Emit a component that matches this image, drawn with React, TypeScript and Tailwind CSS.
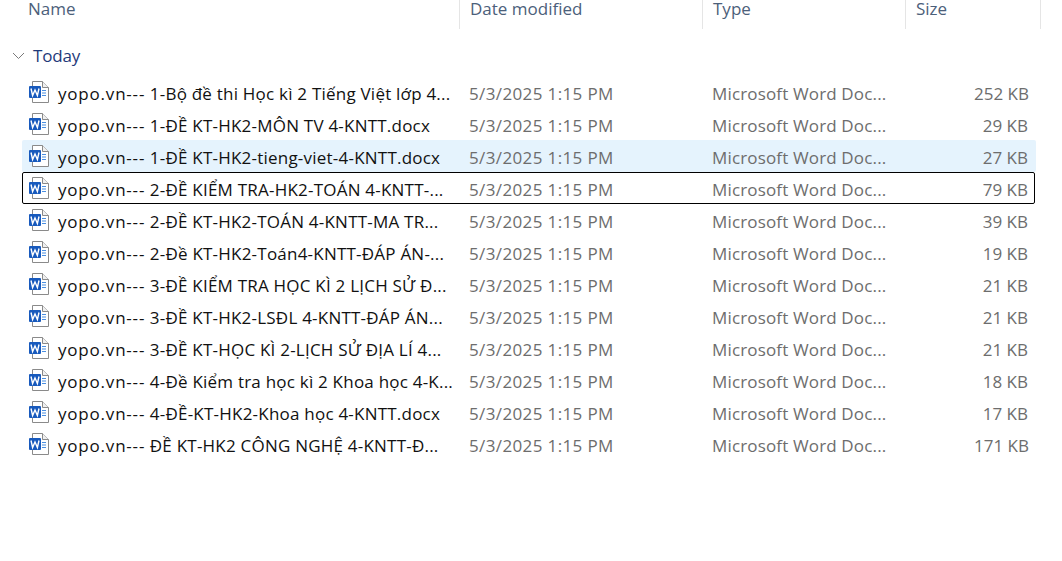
const files = [
  { name: " 1-Bộ đề thi Học kì 2 Tiếng Việt lớp 4...", size: "252 KB" },
  { name: " 1-ĐỀ KT-HK2-MÔN TV 4-KNTT.docx", size: "29 KB" },
  { name: " 1-ĐỀ KT-HK2-tieng-viet-4-KNTT.docx", size: "27 KB", hovered: true },
  { name: " 2-ĐỀ KIỂM TRA-HK2-TOÁN 4-KNTT-...", size: "79 KB", focused: true },
  { name: " 2-ĐỀ KT-HK2-TOÁN 4-KNTT-MA TR...", size: "39 KB" },
  { name: " 2-Đề KT-HK2-Toán4-KNTT-ĐÁP ÁN-...", size: "19 KB" },
  { name: " 3-ĐỀ KIỂM TRA HỌC KÌ 2 LỊCH SỬ Đ...", size: "21 KB" },
  { name: " 3-ĐỀ KT-HK2-LSĐL 4-KNTT-ĐÁP ÁN...", size: "21 KB" },
  { name: " 3-ĐỀ KT-HỌC KÌ 2-LỊCH SỬ ĐỊA LÍ 4...", size: "21 KB" },
  { name: " 4-Đề Kiểm tra học kì 2 Khoa học 4-K...", size: "18 KB" },
  { name: " 4-ĐỀ-KT-HK2-Khoa học 4-KNTT.docx", size: "17 KB" },
  { name: " ĐỀ KT-HK2 CÔNG NGHỆ 4-KNTT-Đ...", size: "171 KB" },
];

function WordIcon() {
  return (
    <svg width="20" height="22" viewBox="0 0 20 22" className="shrink-0">
      <path d="M3.5 .5H13.5L19.5 6.5V21.5H3.5Z" fill="#fff" stroke="#8a8a8a" />
      <path d="M13.5 .5V6.5H19.5" fill="#f0f0f0" stroke="#8a8a8a" />
      <path d="M13 9.5H17M13 12H17M13 14.5H17" stroke="#4a8ee0" strokeWidth="1.2" />
      <rect x="0" y="5" width="12" height="12" rx="1" fill="#185abd" />
      <path d="M2 7.5L3.6 14.5L6 9L8.4 14.5L10 7.5" fill="none" stroke="#fff" strokeWidth="1.4" />
    </svg>
  );
}

function HeaderCell({ label, className }: { label: string; className: string }) {
  return (
    <div className={`h-full border-r border-[#e5e5e5] pl-[10px] leading-[18px] ${className}`}>
      {label}
    </div>
  );
}

export default function App() {
  return (
    <div
      className="h-[561px] w-[1062px] overflow-hidden bg-white text-[17px] leading-[24px]"
      style={{ fontFamily: '"Open Sans", "Noto Sans", sans-serif' }}
    >
      <div className="flex h-[29px] pl-[18px] text-[#4c607a]">
        <HeaderCell label="Name" className="w-[442px]" />
        <HeaderCell label="Date modified" className="w-[243px]" />
        <HeaderCell label="Type" className="w-[203px]" />
        <HeaderCell label="Size" className="w-[135px]" />
      </div>

      <div className="mt-[14px] flex h-[26px] items-center pl-[12px] text-[#1f3a7a]">
        <svg width="13" height="8" viewBox="0 0 13 8" fill="none" stroke="#7a7a7a" strokeWidth="1">
          <path d="M1 1L6.5 6.5L12 1" />
        </svg>
        <span className="ml-[8px] tracking-[-0.2px]">Today</span>
      </div>

      <div className="mt-[7px] ml-[22px] w-[1014px]">
        {files.map((f) => (
          <div
            key={f.name}
            className={`flex h-[32px] items-center rounded-[2px] border ${
              f.focused
                ? "mr-px border-black"
                : f.hovered
                  ? "border-transparent bg-[#e5f3fd]"
                  : "border-transparent"
            }`}
          >
            <div className="ml-[6px] flex w-[440px] items-center gap-[9px] text-[#111111]">
              <WordIcon />
              <span className="whitespace-pre pt-[4px] tracking-[0.22px]">
                <span className="tracking-[0.8px]">yopo.vn---</span>
                {f.name}
              </span>
            </div>
            <span className="w-[243px] pt-[4px] tracking-[0.37px] text-[#6d6d6d]">5/3/2025 1:15 PM</span>
            <span className="w-[262px] pt-[4px] tracking-[0.15px] text-[#6d6d6d]">Microsoft Word Doc...</span>
            <span className="w-[60px] pt-[4px] pr-[6px] text-right whitespace-nowrap text-[#6d6d6d]">{f.size}</span>
          </div>
        ))}
      </div>
    </div>
  );
}
